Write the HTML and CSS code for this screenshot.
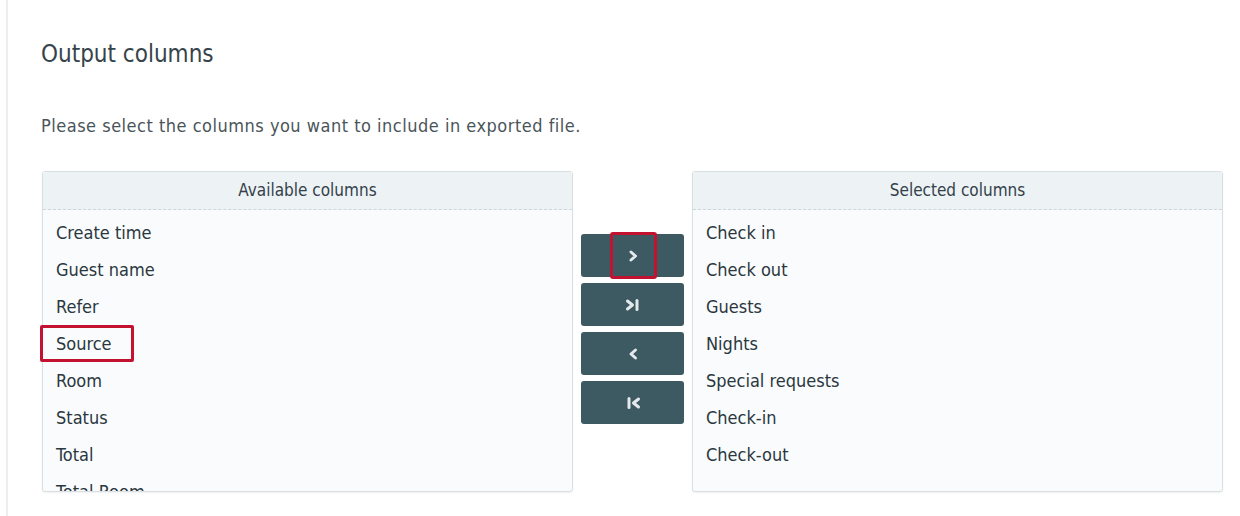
FILE: index.html
```html
<!doctype html>
<html>
    <head>
        <meta charset="utf-8">
        <meta name="viewport" content="width=device-width, initial-scale=1">
        <title>Output columns</title>
        <link rel="stylesheet" href="styles.css">
    </head>
    <body>
        <div class="page">
            <h2 class="title">Output columns</h2>
            <p class="hint">Please select the columns you want to include in exported file.</p>

            <div class="picker">
                <div class="panel">
                    <div class="panel-head">Available columns</div>
                    <ul class="items">
                        <li>Create time</li>
                        <li>Guest name</li>
                        <li>Refer</li>
                        <li class="marked">Source</li>
                        <li>Room</li>
                        <li>Status</li>
                        <li>Total</li>
                        <li>Total Room</li>
                    </ul>
                </div>

                <div class="moves">
                    <button class="move marked-btn" title="Add">
                        <svg width="14" height="14" viewBox="0 0 14 14"><path d="M5 3 L9.5 7 L5 11" fill="none" stroke="#e4eaec" stroke-width="3" stroke-linecap="round" stroke-linejoin="round"/></svg>
                    </button>
                    <button class="move" title="Add all">
                        <svg width="18" height="14" viewBox="0 0 18 14"><path d="M3.5 3 L8.5 7 L3.5 11" fill="none" stroke="#e4eaec" stroke-width="3" stroke-linecap="round" stroke-linejoin="round"/><path d="M13 2.5 V11.5" stroke="#e4eaec" stroke-width="3" stroke-linecap="round"/></svg>
                    </button>
                    <button class="move" title="Remove">
                        <svg width="14" height="14" viewBox="0 0 14 14"><path d="M9.5 3 L5 7 L9.5 11" fill="none" stroke="#e4eaec" stroke-width="3" stroke-linecap="round" stroke-linejoin="round"/></svg>
                    </button>
                    <button class="move" title="Remove all">
                        <svg width="18" height="14" viewBox="0 0 18 14"><path d="M5 2.5 V11.5" stroke="#e4eaec" stroke-width="3" stroke-linecap="round"/><path d="M14.5 3 L9.5 7 L14.5 11" fill="none" stroke="#e4eaec" stroke-width="3" stroke-linecap="round" stroke-linejoin="round"/></svg>
                    </button>
                </div>

                <div class="panel">
                    <div class="panel-head">Selected columns</div>
                    <ul class="items">
                        <li>Check in</li>
                        <li>Check out</li>
                        <li>Guests</li>
                        <li>Nights</li>
                        <li>Special requests</li>
                        <li>Check-in</li>
                        <li>Check-out</li>
                    </ul>
                </div>
            </div>
        </div>
    </body>
</html>
```

FILE: styles.css
```css
* {
    margin: 0;
    padding: 0;
    box-sizing: border-box;
}

body {
    background-color: #ffffff;
    font-family: "DejaVu Sans Condensed", "DejaVu Sans", sans-serif;
    color: #34424a;
}

.page {
    margin-left: 6px;
    height: 516px;
    border-left: 2px solid #eceff1;
    padding: 36px 0 0 33px;
}

.title {
    font-size: 24px;
    font-weight: normal;
    color: #36434a;
    height: 36px;
    line-height: 36px;
}

.hint {
    font-size: 18px;
    color: #4a555a;
    margin-top: 43px;
    line-height: 22px;
    letter-spacing: 0.5px;
}

.picker {
    display: flex;
    margin-top: 34px;
    margin-left: 1px;
    width: 1181px;
    height: 321px;
    gap: 8px;
}

.panel {
    flex: 1;
    border: 1px solid #d9e0e4;
    border-radius: 3px;
    background-color: #f9fbfc;
    display: flex;
    flex-direction: column;
    box-shadow: 0 1px 2px rgba(0, 0, 0, 0.06);
}

.panel-head {
    height: 38px;
    line-height: 37px;
    text-align: center;
    font-size: 17px;
    color: #33414a;
    background-color: #edf2f5;
    border-bottom: 1px dashed #cdd6db;
}

.items {
    list-style: none;
    flex: 1;
    min-height: 0;
    overflow-x: visible;
    overflow-y: clip;
    padding-top: 4px;
    display: flex;
    flex-direction: column;
    align-items: flex-start;
}

.items li {
    height: 37px;
    line-height: 37px;
    padding: 0 14px 0 13px;
    font-size: 18px;
    color: #2a373e;
    flex-shrink: 0;
}

.items li.marked {
    margin-left: -3px;
    padding: 0 22px 0 16px;
    box-shadow: inset 0 0 0 3px #c3122f;
    border-radius: 2px;
}

.moves {
    width: 103px;
    display: flex;
    flex-direction: column;
    gap: 6px;
    padding-top: 63px;
}

.move {
    position: relative;
    height: 43px;
    border: none;
    border-radius: 3px;
    background-color: #3d5961;
    display: flex;
    justify-content: center;
    align-items: center;
    cursor: pointer;
}

.marked-btn::after {
    content: "";
    box-sizing: border-box;
    position: absolute;
    top: -2px;
    bottom: -2px;
    left: 29px;
    width: 47px;
    border: 3px solid #c3122f;
    border-radius: 3px;
}
```
